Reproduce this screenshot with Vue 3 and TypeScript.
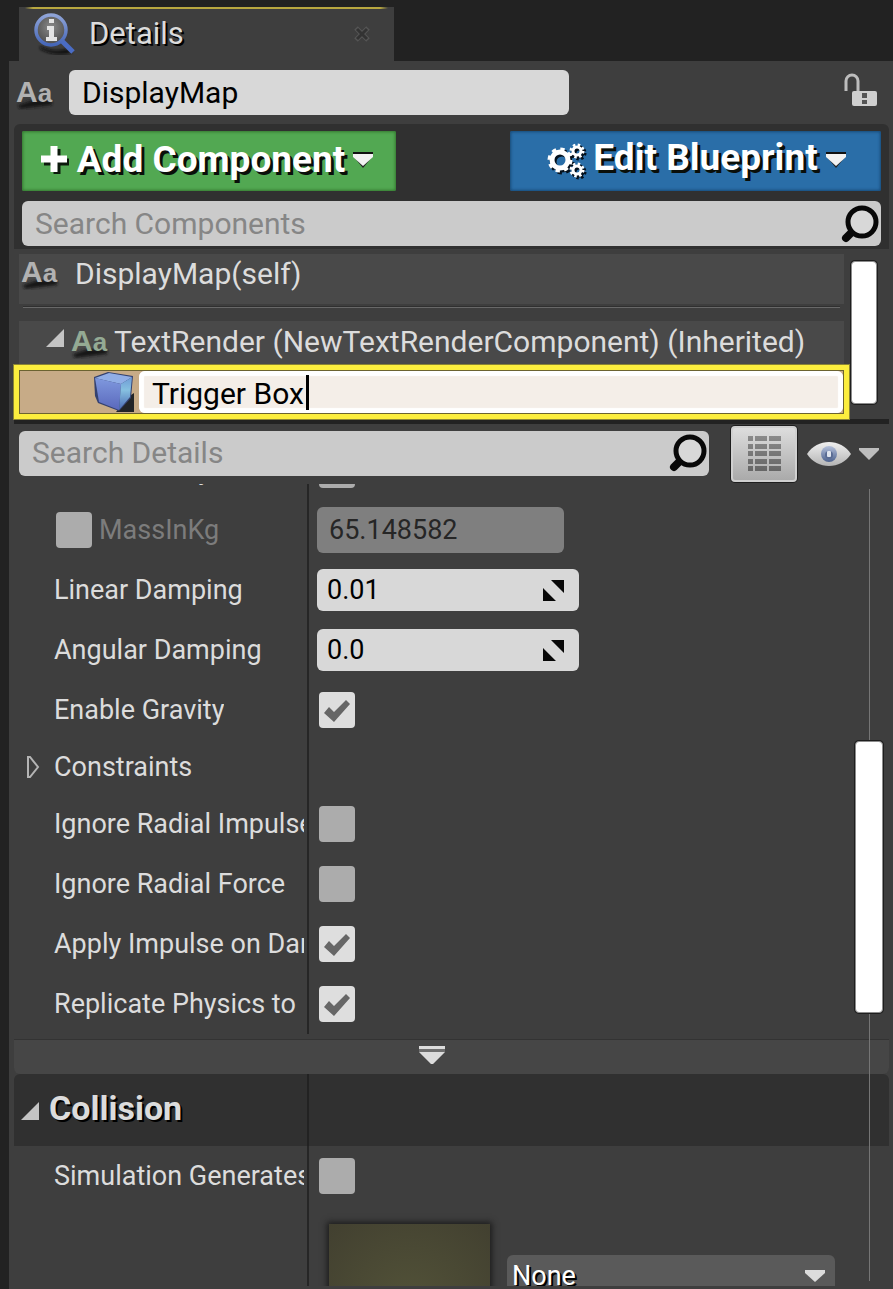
<script setup lang="ts">
import { ref } from 'vue'

interface Property {
  id: string
  label: string
  kind: 'check' | 'number' | 'mass' | 'group'
  checked?: boolean
  value?: string
}

const actorName = ref('DisplayMap')
const componentName = ref('Trigger Box')
const componentQuery = ref('')
const detailQuery = ref('')

const physics = ref<Property[]>([
  { id: 'simulate', label: 'Simulate Physics', kind: 'check', checked: false },
  { id: 'mass', label: 'MassInKg', kind: 'mass', value: '65.148582', checked: false },
  { id: 'linear', label: 'Linear Damping', kind: 'number', value: '0.01' },
  { id: 'angular', label: 'Angular Damping', kind: 'number', value: '0.0' },
  { id: 'gravity', label: 'Enable Gravity', kind: 'check', checked: true },
  { id: 'constraints', label: 'Constraints', kind: 'group' },
  { id: 'radial-impulse', label: 'Ignore Radial Impulse', kind: 'check', checked: false },
  { id: 'radial-force', label: 'Ignore Radial Force', kind: 'check', checked: false },
  { id: 'impulse-damage', label: 'Apply Impulse on Damage', kind: 'check', checked: true },
  { id: 'replicate', label: 'Replicate Physics to', kind: 'check', checked: true },
])
const generatesHits = ref(false)
</script>

<template>
  <div class="window">
    <header class="tab">
      <svg class="tab-icon" width="42" height="42" viewBox="0 0 42 42" aria-hidden="true">
        <defs>
          <radialGradient id="lens" cx="50%" cy="40%" r="60%">
            <stop offset="0" stop-color="#8a8a8a" />
            <stop offset="1" stop-color="#4c4c4c" />
          </radialGradient>
          <linearGradient id="rim" x1="0" y1="0" x2="0" y2="1">
            <stop offset="0" stop-color="#8fa4d8" />
            <stop offset="1" stop-color="#4566b8" />
          </linearGradient>
          <filter id="soft"><feGaussianBlur stdDeviation="1.6" /></filter>
        </defs>
        <path d="M6 33Q18 40 34 36L38 40Q20 44 6 36Z" fill="#111" filter="url(#soft)" />
        <path d="M28 28L39 39" stroke="#4a6cc4" stroke-width="5" />
        <circle cx="17" cy="17" r="15" fill="url(#lens)" stroke="url(#rim)" stroke-width="3.5" />
        <path d="M13 13h7v11h3v4H12v-4h3v-7h-2zM15 6h5v4h-5z" fill="#e4e4e4" />
      </svg>
      <span class="tab-title">Details</span>
      <button class="tab-close" type="button" aria-label="Close tab">
        <svg width="16" height="16" viewBox="0 0 16 16">
          <path d="M2 2L14 14M14 2L2 14" stroke="#555" stroke-width="5" />
          <path d="M3 3L13 13M13 3L3 13" stroke="#333" stroke-width="3" />
        </svg>
      </button>
    </header>

    <main class="panel">
      <div class="identity">
        <svg class="type-icon" width="38" height="34" viewBox="0 0 38 34" aria-hidden="true">
          <path d="M2 29L17 24L36 24L36 29L4 33Z" fill="#151515" filter="url(#soft)" />
          <text x="0" y="26" class="glyph grey">A<tspan class="small">a</tspan></text>
        </svg>
        <input v-model="actorName" class="field name-field" type="text" aria-label="Actor name" />
        <button class="lock" type="button" aria-label="Lock selection">
          <svg width="36" height="36" viewBox="0 0 36 36">
            <path d="M4 18V8a6 6 0 0 1 12 0v11" fill="none" stroke="#bdbdbd" stroke-width="3" />
            <rect x="10" y="18" width="25" height="15" rx="2" fill="#cfcfcf" />
            <path d="M20 20h5v5h-5zM20 27h5v4h-5z" fill="#555" />
          </svg>
        </button>
      </div>

      <section class="toolbar">
        <div class="actions">
          <button class="action add" type="button">
            <svg width="28" height="30" viewBox="0 0 28 30">
              <path d="M16 4v25M3 17h25" stroke="#0c1a0c" stroke-width="7" />
              <path d="M13 1v26M0 14h26" stroke="#fff" stroke-width="7" />
            </svg>
            <span>Add Component</span>
            <svg width="20" height="16" viewBox="0 0 20 16">
              <path d="M0 0h20v3H0z" fill="#111" />
              <path d="M0 4L10 16L20 4z" fill="#222" />
              <path d="M0 2h20v3L10 14L0 5z" fill="#f2f2f2" />
            </svg>
          </button>
          <button class="action edit" type="button">
            <svg class="gears" width="38" height="38" viewBox="0 0 38 38" fill="none" stroke="#fff">
              <circle cx="13" cy="19" r="8" stroke-width="5" />
              <circle cx="13" cy="19" r="11" stroke-width="3" stroke-dasharray="4.32 4.32" />
              <circle cx="30" cy="10" r="4" stroke-width="3" />
              <circle cx="30" cy="10" r="6" stroke-width="3" stroke-dasharray="2.36 2.35" />
              <circle cx="30" cy="29" r="4" stroke-width="3" />
              <circle cx="30" cy="29" r="6" stroke-width="3" stroke-dasharray="2.36 2.35" />
            </svg>
            <span>Edit Blueprint</span>
            <svg width="20" height="16" viewBox="0 0 20 16">
              <path d="M0 0h20v3H0z" fill="#111" />
              <path d="M0 4L10 16L20 4z" fill="#222" />
              <path d="M0 2h20v3L10 14L0 5z" fill="#f2f2f2" />
            </svg>
          </button>
        </div>
        <label class="field search">
          <input v-model="componentQuery" type="text" placeholder="Search Components" aria-label="Search Components" />
          <svg width="40" height="40" viewBox="0 0 40 40">
            <path d="M11 28L5 34" stroke="#080808" stroke-width="8" stroke-linecap="round" />
            <circle cx="21" cy="18" r="14" fill="#d8d8d8" stroke="#080808" stroke-width="5" />
          </svg>
        </label>
      </section>

      <section class="tree">
        <div class="tree-list">
          <div class="node root-node">
            <svg class="type-icon" width="38" height="34" viewBox="0 0 38 34" aria-hidden="true">
              <path d="M2 29L17 24L36 24L36 29L4 33Z" fill="#151515" filter="url(#soft)" />
              <text x="0" y="26" class="glyph grey">A<tspan class="small">a</tspan></text>
            </svg>
            <span>DisplayMap(self)</span>
          </div>
          <hr class="divider" />
          <div class="node child-node">
            <svg class="expander" width="18" height="18" viewBox="0 0 18 18"><path d="M18 0V18H0z" fill="#c4c4c4" /></svg>
            <svg class="type-icon" width="38" height="34" viewBox="0 0 38 34" aria-hidden="true">
              <path d="M2 29L17 24L36 24L36 29L4 33Z" fill="#151515" filter="url(#soft)" />
              <text x="0" y="26" class="glyph green">A<tspan class="small">a</tspan></text>
            </svg>
            <span>TextRender (NewTextRenderComponent) (Inherited)</span>
          </div>
          <div class="editing">
            <svg width="40" height="40" viewBox="0 0 40 40" aria-hidden="true">
              <defs>
                <linearGradient id="cubeFront" x1="0" y1="0" x2="0" y2="1">
                  <stop offset="0" stop-color="#7f98de" />
                  <stop offset="1" stop-color="#5a68bc" />
                </linearGradient>
                <linearGradient id="cubeSide" x1="0" y1="0" x2="0" y2="1">
                  <stop offset="0" stop-color="#6f9bd6" />
                  <stop offset="0.4" stop-color="#86c0e0" />
                  <stop offset="1" stop-color="#4a68b2" />
                </linearGradient>
              </defs>
              <path d="M34 25L40 21V40H22z" fill="#222426" />
              <path d="M0 5L14 0L39 4L37 26L25 39L4 31L1 24z" fill="#34416f" />
              <path d="M1 6L15 1L38 5L27 12z" fill="#91aee6" />
              <path d="M1 6L27 12L25 38L5 30z" fill="url(#cubeFront)" />
              <path d="M27 12L38 5L36 25L25 38z" fill="url(#cubeSide)" />
            </svg>
            <div class="rename">
              <input v-model="componentName" type="text" aria-label="Component name" />
              <span class="caret"></span>
            </div>
          </div>
        </div>
        <div class="tree-scroll"><div class="thumb"></div></div>
      </section>

      <section class="filter">
        <label class="field search">
          <input v-model="detailQuery" type="text" placeholder="Search Details" aria-label="Search Details" />
          <svg width="40" height="40" viewBox="0 0 40 40">
            <path d="M11 28L5 34" stroke="#080808" stroke-width="8" stroke-linecap="round" />
            <circle cx="21" cy="18" r="14" fill="#d8d8d8" stroke="#080808" stroke-width="5" />
          </svg>
        </label>
        <button class="matrix" type="button" aria-label="Property matrix">
          <svg width="34" height="36" viewBox="0 0 34 36">
            <defs>
              <linearGradient id="cells" x1="0" y1="0" x2="0" y2="1">
                <stop offset="0" stop-color="#8a8a8a" />
                <stop offset="1" stop-color="#666" />
              </linearGradient>
            </defs>
            <path
              fill="url(#cells)"
              d="M1 0h5v5H1zM8 0h12v5H8zM22 0h12v5H22zM1 8h5v5H1zM8 8h12v5H8zM22 8h12v5H22zM1 15h5v5H1zM8 15h12v5H8zM22 15h12v5H22zM1 23h5v5H1zM8 23h12v5H8zM22 23h12v5H22zM1 30h5v5H1zM8 30h12v5H8zM22 30h12v5H22z"
            />
          </svg>
        </button>
        <button class="view" type="button" aria-label="View options">
          <svg width="44" height="26" viewBox="0 0 44 26">
            <defs>
              <linearGradient id="eyeball" x1="0" y1="0" x2="0" y2="1">
                <stop offset="0" stop-color="#f0f0f0" />
                <stop offset="1" stop-color="#b4b4b4" />
              </linearGradient>
              <linearGradient id="iris" x1="0" y1="0" x2="0" y2="1">
                <stop offset="0" stop-color="#b4c0da" />
                <stop offset="1" stop-color="#4d628e" />
              </linearGradient>
            </defs>
            <path d="M0 13C10-3 34-3 44 13C34 29 10 29 0 13z" fill="url(#eyeball)" />
            <circle cx="22" cy="13" r="8" fill="url(#iris)" />
            <circle cx="22" cy="14" r="4" fill="#5a6c94" />
            <rect x="20" y="10" width="4" height="6" rx="1" fill="#dfe4ee" />
          </svg>
          <svg width="20" height="12" viewBox="0 0 20 12"><path d="M0 0h20v2L10 12L0 2z" fill="#bdbdbd" /></svg>
        </button>
      </section>

      <section class="details">
        <div class="rows">
          <div v-for="p in physics" :key="p.id" class="row" :class="p.kind">
            <div class="name">
              <input v-if="p.kind === 'mass'" v-model="p.checked" class="check" type="checkbox" aria-label="Override MassInKg" />
              <svg v-if="p.kind === 'group'" class="closed" width="14" height="22" viewBox="0 0 14 22">
                <path d="M2 1H4L12 11L4 21H2z" fill="none" stroke="#b4b4b4" stroke-width="2" />
              </svg>
              <label :for="p.id">{{ p.label }}</label>
            </div>
            <div class="value">
              <input v-if="p.kind === 'check'" :id="p.id" v-model="p.checked" class="check" type="checkbox" />
              <input v-else-if="p.kind === 'mass'" :id="p.id" v-model="p.value" class="field mass-field" type="text" disabled />
              <div v-else-if="p.kind === 'number'" class="field spin">
                <input :id="p.id" v-model="p.value" type="text" />
                <svg width="21" height="21" viewBox="0 0 21 21"><path d="M8 0H21V13zM0 8L13 21H0z" fill="#080808" /></svg>
              </div>
            </div>
          </div>
          <button class="advanced" type="button" aria-label="Hide advanced">
            <svg width="26" height="18" viewBox="0 0 26 18">
              <path d="M0 3h26v3H0z" fill="#6e6e6e" />
              <path d="M0 0h26v3H0zM0 6h26L14 18h-2z" fill="#dcdcdc" />
            </svg>
          </button>
          <div class="category">
            <h2 class="name">
              <svg width="18" height="18" viewBox="0 0 18 18"><path d="M18 0V18H0z" fill="#c4c4c4" /></svg>
              <span>Collision</span>
            </h2>
          </div>
          <div class="row check">
            <div class="name"><label for="hits">Simulation Generates Hit Events</label></div>
            <div class="value"><input id="hits" v-model="generatesHits" class="check" type="checkbox" /></div>
          </div>
          <div class="row asset">
            <div class="name"></div>
            <div class="value">
              <div class="preview"></div>
              <div class="picker">
                <select aria-label="Physical material"><option>None</option></select>
                <svg width="20" height="12" viewBox="0 0 20 12"><path d="M0 0h20v3L10 12L0 3z" fill="#dcdcdc" /></svg>
              </div>
            </div>
          </div>
        </div>
        <div class="track"></div>
        <div class="thumb main-thumb"></div>
      </section>
    </main>
  </div>
</template>

<style>
body {
  margin: 0;
  background: #222;
}
</style>

<style scoped>
* {
  box-sizing: border-box;
}
svg {
  display: block;
  flex: none;
}
.window {
  display: flex;
  flex-direction: column;
  height: 100vh;
  padding: 7px 0 0 9px;
  overflow: hidden;
  background: #222;
  color: #dcdcdc;
  font: 30px/36px Roboto, sans-serif;
}
button,
input,
select {
  margin: 0;
  padding: 0;
  border: 0;
  background: none;
  color: inherit;
  font: inherit;
}
input {
  min-width: 0;
}
.tab {
  display: flex;
  align-items: center;
  flex: none;
  width: 43%;
  max-width: 375px;
  height: 54px;
  margin-left: 10px;
  padding: 0 24px 0 15px;
  background: linear-gradient(90deg, transparent 6px, #b9a840 14px, #b9a840 calc(100% - 14px), transparent calc(100% - 6px)) 0 0 / 100% 2px no-repeat #3e3e3e;
}
.tab-title {
  flex: 1;
  margin-left: 13px;
  font-size: 31px;
  text-shadow: 2px 2px 0 #000;
}
.panel {
  display: flex;
  flex: 1;
  flex-direction: column;
  min-height: 0;
  padding: 0 4px 3px 5px;
  background: #3e3e3e;
}
.identity {
  display: flex;
  align-items: center;
  flex: none;
  height: 63px;
  padding: 0 11px 0 2px;
}
.type-icon {
  overflow: visible;
}
.field {
  height: 45px;
  border-radius: 6px;
  background: #d8d8d8;
  color: #000;
}
.name-field {
  flex: 0 1 500px;
  margin-left: 15px;
  padding: 0 13px;
}
.lock {
  margin: 0 0 4px auto;
}
.glyph {
  font: bold 30px "Liberation Sans", sans-serif;
}
.small {
  font-size: 26px;
}
.grey {
  fill: #b2b2b2;
}
.green {
  fill: #94aa94;
}
.toolbar {
  display: flex;
  flex: none;
  flex-direction: column;
  gap: 10px;
  padding: 7px 8px 3px;
  border-radius: 6px 6px 0 0;
  background: #303030;
}
.actions {
  display: flex;
  justify-content: space-between;
  gap: 12px;
}
.action {
  display: flex;
  align-items: center;
  justify-content: center;
  height: 60px;
  padding-bottom: 2px;
  gap: 8px;
  border-radius: 2px;
  color: #fff;
  font-size: 37px;
  font-weight: 700;
  white-space: nowrap;
  text-shadow: 3px 3px 0 #0a0f0a;
}
.add {
  flex: 0 1 374px;
  padding-right: 4px;
  background: #52a852;
  box-shadow: inset 0 0 3px 1px #33782f;
}
.edit {
  flex: 0 1 371px;
  padding: 0 0 7px 2px;
  background: #2a6ea8;
  box-shadow: inset 0 0 3px 1px #174a78;
}
.edit svg {
  margin-top: 5px;
}
.gears {
  filter: drop-shadow(2px 2px 0 #04101c);
}
.search {
  display: flex;
  align-items: center;
  padding-left: 13px;
  background: #cbcbcb;
}
.search input {
  flex: 1;
  outline: 0;
}
.search input::placeholder {
  color: #868686;
  opacity: 1;
}
.tree {
  display: flex;
  flex: none;
  padding-top: 5px;
  border-bottom: 5px solid #222;
}
.tree-list {
  flex: 1;
  min-width: 0;
  margin: 0 0 -1px 5px;
}
.node {
  display: flex;
  background: #494949;
  white-space: nowrap;
  overflow: hidden;
}
.root-node {
  height: 50px;
  padding: 2px;
  gap: 16px;
}
.divider {
  height: 2px;
  margin: 2px 4px 13px;
  border: 0;
  background: linear-gradient(#303030 50%, #686868 50%);
}
.child-node {
  align-items: center;
  height: 43px;
  padding: 0 0 2px 27px;
}
.expander {
  margin: 0 7px 8px 0;
}
.child-node span {
  margin-left: 5px;
}
.editing {
  position: relative;
  display: flex;
  align-items: center;
  height: 56px;
  margin: 0 -6px;
  padding: 0 0 0 75px;
  border: 6px solid #fcee3e;
  outline: 1px solid #8a8434;
  outline-offset: -1px;
  background: #c7ab87;
  box-shadow: inset 0 0 0 1px #6b6331;
}
.rename {
  position: relative;
  flex: 1;
  min-width: 0;
  height: 42px;
  margin-left: 5px;
  margin-right: 1px;
}
.rename input {
  display: block;
  width: 100%;
  height: 100%;
  padding: 2px 13px 0;
  border-radius: 6px;
  outline: 0;
  background: #f4eee8;
  box-shadow: inset 0 0 1px 5px #fff;
  color: #000;
}
.caret {
  position: absolute;
  top: 4px;
  left: 167px;
  width: 3px;
  height: 35px;
  background: #000;
}
.tree-scroll {
  flex: none;
  width: 45px;
  padding: 7px 12px 15px 7px;
}
.thumb {
  height: 100%;
  border: 1px solid #8c8c8c;
  border-radius: 4px;
  background: #fff;
  box-shadow: 0 0 0 1px #1e1e1e;
}
.filter {
  display: flex;
  align-items: center;
  flex: none;
  height: 60px;
  padding: 0 10px 0 5px;
}
.filter .search {
  flex: 1;
  min-width: 0;
  margin-bottom: 2px;
}
.matrix {
  display: grid;
  place-items: center;
  width: 66px;
  height: 56px;
  margin: 0 10px 0 22px;
  border: 2px solid #d0d0d0;
  border-radius: 4px;
  background: linear-gradient(#ddd, #aaa);
  box-shadow: 0 0 0 1px #1e1e1e;
}
.view {
  display: flex;
  align-items: center;
  gap: 8px;
}
.details {
  position: relative;
  flex: 1;
  min-height: 0;
  overflow: hidden;
  font-size: 27px;
}
.rows {
  margin-top: -44px;
}
.row {
  display: flex;
  height: 60px;
}
.row.group {
  height: 54px;
}
.name {
  position: relative;
  display: flex;
  align-items: center;
  flex: none;
  width: 295px;
  padding: 0 3px 0 40px;
  border-right: 2px solid #262626;
}
.name label {
  overflow: hidden;
  white-space: nowrap;
}
.value {
  display: flex;
  align-items: center;
  flex: 1;
  min-width: 0;
  padding-left: 8px;
}
input.check {
  position: relative;
  flex: none;
  width: 36px;
  height: 36px;
  margin: 0 2px;
  border-radius: 4px;
  background: #acacac;
  appearance: none;
}
input.check:checked {
  background: #dedede;
}
input.check:checked::before {
  display: block;
  width: 36px;
  height: 36px;
  background: #666;
  clip-path: polygon(5px 21px, 10px 15px, 15px 20px, 27px 8px, 31px 12px, 15px 30px);
  content: '';
}
.mass .name label {
  margin-left: 5px;
  color: #7c7c7c;
}
.mass-field {
  flex: 0 1 247px;
  height: 46px;
  padding: 0 12px;
  background: #7f7f7f;
  color: #262626;
}
.spin {
  display: flex;
  align-items: center;
  flex: 0 1 262px;
  min-width: 0;
  height: 42px;
  padding: 0 15px 0 10px;
}
.spin input {
  flex: 1;
  outline: 0;
}
.closed {
  margin: 0 14px 0 -28px;
}
.advanced {
  display: flex;
  justify-content: center;
  width: 100%;
  height: 34px;
  margin-top: 6px;
  padding: 6px 40px 0 0;
  border-radius: 0 0 6px 6px;
  background: #464646;
  box-shadow: 0 -1px 0 #333;
}
.category {
  display: flex;
  height: 72px;
  border-radius: 6px 6px 0 0;
  background: #303030;
}
.category .name {
  gap: 10px;
  margin: 0;
  padding: 0 0 4px 7px;
  border-color: #222;
  font-size: 34px;
  text-shadow: 2px 2px 0 #000;
}
.category svg {
  margin-top: 5px;
}
.asset {
  height: 120px;
}
.asset .value {
  align-items: flex-start;
  padding: 18px 54px 0 20px;
}
.preview {
  flex: none;
  width: 161px;
  height: 161px;
  background: radial-gradient(circle, #525238, #424030);
  box-shadow: 0 0 6px 2px #1c1c1c;
}
.picker {
  display: flex;
  align-items: center;
  flex: 1;
  min-width: 0;
  height: 42px;
  margin: 31px 0 0 17px;
  padding-right: 10px;
  border-radius: 6px;
  background: #5a5a5a;
}
.picker select {
  flex: 1;
  min-width: 0;
  padding-left: 5px;
  appearance: none;
  color: #fff;
  text-shadow: 2px 2px 0 #000;
}
.track {
  position: absolute;
  top: 5px;
  bottom: 5px;
  right: 19px;
  width: 1px;
  background: #757575;
}
.main-thumb {
  position: absolute;
  top: 32%;
  right: 6px;
  bottom: 34%;
  width: 28px;
  height: auto;
}
</style>
